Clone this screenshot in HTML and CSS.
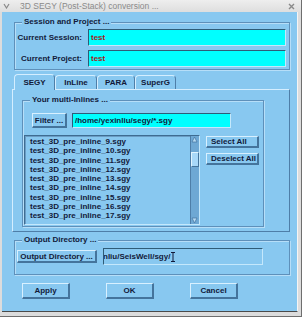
FILE: index.html
```html
<!DOCTYPE html>
<html lang="en">
<head>
  <meta charset="UTF-8">
  <title>3D SEGY (Post-Stack) conversion</title>
  <link rel="stylesheet" href="styles.css">
</head>
<body>
  <div class="window">
    <div class="titlebar">
      <svg class="menu-arrow" width="7" height="6" viewBox="0 0 7 6"><path d="M1 1 L3.5 5 L6 1" fill="none" stroke="#8a8a8a" stroke-width="1.2"/></svg>
      <span class="title">3D SEGY (Post-Stack) conversion ...</span>
      <svg class="close" width="7" height="7" viewBox="0 0 7 7"><path d="M1 1 L6 6 M6 1 L1 6" stroke="#8a8a8a" stroke-width="1.4"/></svg>
    </div>

    <div class="client">
      <fieldset class="group session">
        <legend>Session and Project ...</legend>
        <div class="form-row">
          <label>Current Session:</label>
          <div class="entry cyan value">test</div>
        </div>
        <div class="form-row">
          <label>Current Project:</label>
          <div class="entry cyan value">test</div>
        </div>
      </fieldset>

      <div class="tabs">
        <div class="tab active">SEGY</div>
        <div class="tab w-inline">InLine</div>
        <div class="tab w-para">PARA</div>
        <div class="tab w-super">SuperG</div>
      </div>

      <div class="tab-panel">
        <fieldset class="group inlines">
          <legend>Your multi-Inlines ...</legend>
          <div class="filter-row">
            <button class="btn filter-btn">Filter ...</button>
            <div class="entry cyan path">/home/yexinliu/segy/*.sgy</div>
          </div>
          <div class="list-row">
            <div class="listbox">
              <ul class="items">
                <li>test_3D_pre_inline_9.sgy</li>
                <li>test_3D_pre_inline_10.sgy</li>
                <li>test_3D_pre_inline_11.sgy</li>
                <li>test_3D_pre_inline_12.sgy</li>
                <li>test_3D_pre_inline_13.sgy</li>
                <li>test_3D_pre_inline_14.sgy</li>
                <li>test_3D_pre_inline_15.sgy</li>
                <li>test_3D_pre_inline_16.sgy</li>
                <li>test_3D_pre_inline_17.sgy</li>
              </ul>
              <div class="scrollbar">
                <svg class="arrow" width="7" height="7" viewBox="0 0 7 7"><path d="M3.5 1 L6 6 L1 6 Z" fill="#b8dcf4" stroke="#4a7aa4" stroke-width="0.8"/></svg>
                <div class="thumb"></div>
                <div class="trough"></div>
                <svg class="arrow" width="7" height="7" viewBox="0 0 7 7"><path d="M1 1 L6 1 L3.5 6 Z" fill="#b8dcf4" stroke="#4a7aa4" stroke-width="0.8"/></svg>
              </div>
            </div>
            <div class="list-buttons">
              <button class="btn small">Select All</button>
              <button class="btn small">Deselect All</button>
            </div>
          </div>
        </fieldset>
      </div>

      <fieldset class="group output">
        <legend>Output Directory ...</legend>
        <div class="output-row">
          <button class="btn out-btn">Output Directory ...</button>
          <div class="entry plain out-path">
            <span class="clip">nliu/SeisWell/sgy/</span>
            <svg class="caret" width="4" height="10" viewBox="0 0 4 10"><path d="M0 0.5 H4 M0 9.5 H4 M2 0.5 V9.5" stroke="#121a3a" stroke-width="1"/></svg>
          </div>
        </div>
      </fieldset>

      <div class="actions">
        <button class="btn action">Apply</button>
        <button class="btn action">OK</button>
        <button class="btn action">Cancel</button>
      </div>
    </div>
  </div>
</body>
</html>
```

FILE: styles.css
```css
body {
  margin: 0;
  padding: 0;
  background: #9a9a9a;
  font-family: "Liberation Sans", Arial, sans-serif;
  font-size: 8px;
  font-weight: bold;
  color: #121a3a;
}

.window {
  width: 302px;
  height: 317px;
  background: #dcdcdc;
  box-sizing: border-box;
  border-right: 1px solid #6e6e6e;
  border-bottom: 1px solid #6e6e6e;
}

/* Title bar */
.titlebar {
  height: 12px;
  display: flex;
  align-items: center;
  background: linear-gradient(#eeeeee, #dedede);
  color: #8a8a8a;
  font-weight: normal;
  font-size: 8.5px;
}

.menu-arrow {
  margin-left: 3px;
}

.title {
  margin-left: 10px;
  flex: 1;
}

.close {
  margin-right: 6px;
}

/* Blue client area */
.client {
  margin: 0 3px 0 2px;
  height: 300px;
  background: #88c8f0;
  border-right: 1px solid #f4f4f4;
  border-bottom: 1px solid #4a4a4a;
  box-sizing: border-box;
  padding-top: 5px;
}

.group {
  margin: 0;
  padding: 0;
  min-width: 0;
  border: 1px solid #5e90ba;
  box-shadow: inset 1px 1px 0 #b6def8, 1px 1px 0 #b6def8;
  box-sizing: border-box;
}

.group legend {
  margin-left: 7px;
  padding: 0 2px;
  line-height: 10px;
  height: 10px;
  background: #88c8f0;
}

/* Session and project */
.session {
  margin-left: 12px;
  width: 276px;
  padding: 2px 0 2px 0;
}

.form-row {
  display: flex;
  align-items: center;
  gap: 6px;
}

.form-row + .form-row {
  margin-top: 4px;
}

.form-row label {
  width: 67px;
  text-align: right;
}

.entry {
  box-sizing: border-box;
  border-top: 1px solid #2e5c78;
  border-left: 1px solid #2e5c78;
  border-bottom: 1px solid #c4e8fc;
  border-right: 1px solid #c4e8fc;
  display: flex;
  align-items: center;
  padding-left: 2px;
  white-space: nowrap;
  overflow: hidden;
}

.cyan {
  background: #00ffff;
}

.value {
  width: 198px;
  height: 17px;
  color: #a01c1c;
}

/* Tabs */
.tabs {
  display: flex;
  margin: 4px 0 0 12px;
  height: 15px;
}

.tab {
  width: 41px;
  box-sizing: border-box;
  border: 1px solid #4e7ea8;
  border-bottom: none;
  border-top-color: #d4eeff;
  border-left-color: #d4eeff;
  border-radius: 4px 4px 0 0;
  display: flex;
  align-items: center;
  justify-content: center;
  margin-top: 1px;
}

.tab.active {
  width: 41px;
  margin-top: 0;
  height: 16px;
  background: #88c8f0;
  position: relative;
  z-index: 1;
}

.w-inline { width: 42px; }
.w-para { width: 38px; }
.w-super { width: 41px; }

.tab-panel {
  margin-left: 10px;
  width: 278px;
  height: 143px;
  box-sizing: border-box;
  border-top: 1px solid #d4eeff;
  border-left: 1px solid #d4eeff;
  border-right: 1px solid #4e7ea8;
  border-bottom: 1px solid #4e7ea8;
  padding-top: 5px;
}

/* Multi inlines */
.inlines {
  margin-left: 9px;
  width: 242px;
  height: 132px;
  padding: 0 0 0 0;
}

.filter-row {
  display: flex;
  gap: 5px;
  margin: 8px 0 0 9px;
}

.btn {
  font-family: "Liberation Sans", Arial, sans-serif;
  font-size: 8px;
  font-weight: bold;
  color: #121a3a;
  background: #88c8f0;
  margin: 0;
  padding: 0;
  box-sizing: border-box;
  border-top: 1px solid #d8f0ff;
  border-left: 1px solid #d8f0ff;
  border-right: 2px solid #44749c;
  border-bottom: 2px solid #44749c;
}

.filter-btn {
  width: 35px;
  height: 15px;
}

.path {
  width: 159px;
  height: 15px;
  color: #121a3a;
}

.list-row {
  display: flex;
  gap: 6px;
  margin-top: 7px;
}

.listbox {
  margin-left: 1px;
  width: 176px;
  height: 90px;
  box-sizing: border-box;
  display: flex;
  border-top: 1px solid #3e6c92;
  border-left: 1px solid #3e6c92;
  border-right: 1px solid #c4e8fc;
  border-bottom: 1px solid #c4e8fc;
  box-shadow: inset 1px 1px 0 #6a9cc4;
}

.items {
  list-style: none;
  margin: 0;
  padding: 1px 0 0 5px;
  flex: 1;
  line-height: 9.3px;
  overflow: hidden;
}

.scrollbar {
  width: 8px;
  display: flex;
  flex-direction: column;
  background: #6ea8d4;
  border-left: 1px solid #4e7ea8;
}

.arrow {
  display: block;
}

.thumb {
  margin-top: 9px;
  height: 15px;
  box-sizing: border-box;
  background: #a8d8f8;
  border-top: 1px solid #e0f4ff;
  border-left: 1px solid #e0f4ff;
  border-right: 1px solid #44749c;
  border-bottom: 1px solid #44749c;
}

.trough {
  flex: 1;
}

.list-buttons {
  display: flex;
  flex-direction: column;
  gap: 5px;
  padding-top: 1px;
}

.small {
  width: 53px;
  height: 12px;
  text-align: left;
  padding-left: 4px;
}

/* Output directory */
.output {
  margin: 3px 0 0 12px;
  width: 276px;
  height: 40px;
}

.output-row {
  display: flex;
  align-items: center;
  gap: 6px;
  margin: 3px 0 0 2px;
}

.out-btn {
  width: 80px;
  height: 13px;
}

.plain {
  background: #88c8f0;
}

.out-path {
  width: 160px;
  height: 17px;
}

.clip {
  margin-left: -3px;
}

.caret {
  margin-left: 1px;
}

/* Bottom buttons */
.actions {
  display: flex;
  gap: 36px;
  margin: 8px 0 0 20px;
}

.action {
  width: 48px;
  height: 16px;
}
```
